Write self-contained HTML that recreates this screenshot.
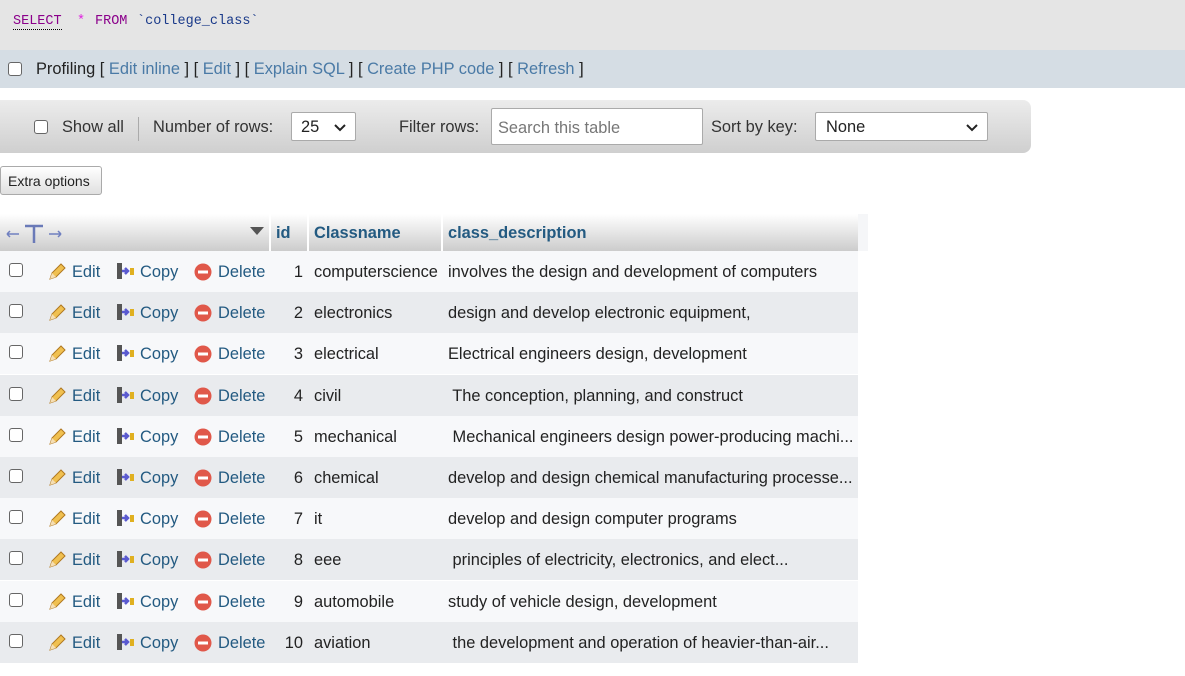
<!DOCTYPE html>
<html><head><style>
*{margin:0;padding:0;box-sizing:border-box}
body{width:1185px;height:676px;background:#fff;font-family:"Liberation Sans",Arial,sans-serif;font-size:16.4px;color:#222;position:relative;overflow:hidden}
.abs{position:absolute}
.sql{left:0;top:0;width:1185px;height:50px;background:#e5e5e5}
.sql span{position:absolute;top:14px;font-family:"Liberation Mono",monospace;font-size:13.5px}
.prof{left:0;top:50px;width:1185px;height:38px;background:#d5dde4}
.cb{position:absolute;width:14px;height:14px;border:1px solid #666;border-radius:3px;background:#fff}
a,.lk{color:#4a7aa6}
.nav{left:0;top:100px;width:1031px;height:53px;border-radius:0 8px 8px 0;background:linear-gradient(#ececec,#cfcfcf)}
.nav .t{position:absolute;top:18px;color:#333}
.sel{position:absolute;background:#fff;border:1px solid #aaa;border-radius:2px;height:32px;top:10px;padding:7px 9px}
.sel svg{position:absolute;right:9px;top:11px}
.btn{left:0;top:166px;width:102px;height:29px;border:1px solid #aaa;border-radius:3px;background:linear-gradient(#fff,#e0e0e0);font-size:14px;padding:6px 0 0 7px}
.hdr{left:0;top:214px;width:858px;height:37px;background:linear-gradient(#fff,#ccc)}
.hdr b{position:absolute;top:10px;color:#235a81}
.row{position:absolute;left:0;width:858px;height:41px}
.row span{position:absolute;top:12px}
.l{color:#235a81}
</style></head><body>
<div class="abs sql"><span style="left:13px;color:#8b008b;border-bottom:1px dotted #000;line-height:15px">SELECT</span><span style="left:77px;color:#e020e0">*</span><span style="left:95px;color:#8b008b">FROM</span><span style="left:137px;color:#1a3a8a">`college_class`</span></div>
<div class="abs prof"><div class="cb" style="left:8px;top:12px"></div><span style="position:absolute;left:36px;top:10px">Profiling [ <a>Edit inline</a> ] [ <a>Edit</a> ] [ <a>Explain SQL</a> ] [ <a>Create PHP code</a> ] [ <a>Refresh</a> ]</span></div>
<div class="abs nav">
<div class="cb" style="left:34px;top:20px"></div>
<span class="t" style="left:62px">Show all</span>
<div style="position:absolute;left:138px;top:17px;width:1px;height:24px;background:#aaa"></div>
<span class="t" style="left:153px">Number of rows:</span>
<div class="sel" style="left:291px;width:65px;top:12px;height:29px;padding:5px 9px">25<svg width="12" height="8"><path d="M1 1l5 5 5-5" stroke="#222" stroke-width="2" fill="none"/></svg></div>
<span class="t" style="left:399px">Filter rows:</span>
<div class="sel" style="left:491px;width:212px;top:8px;height:37px;padding:10px 6px;color:#777">Search this table</div>
<span class="t" style="left:711px">Sort by key:</span>
<div class="sel" style="left:815px;width:173px;top:12px;height:29px;padding:5px 10px">None<svg width="12" height="8"><path d="M1 1l5 5 5-5" stroke="#222" stroke-width="2" fill="none"/></svg></div>
</div>
<div class="abs btn">Extra options</div>
<div class="abs" style="left:858px;top:214px;width:10px;height:37px;background:#f5f6f8"></div>
<div class="abs hdr">
<svg style="position:absolute;left:4px;top:9px" width="60" height="22"><path d="M3 11h12M3 11l3-3M3 11l3 3M45 11h12M57 11l-3-3M57 11l-3 3" stroke="#7080c0" stroke-width="1.5" fill="none"/><path d="M21 3h18M30 3v17" stroke="#6a7ab8" stroke-width="2.5"/></svg>
<svg style="position:absolute;left:250px;top:13px" width="14" height="9"><path d="M0 0h14L7 8z" fill="#555"/></svg>
<div style="position:absolute;left:269px;top:0;width:2px;height:37px;background:#fff"></div>
<div style="position:absolute;left:307px;top:0;width:2px;height:37px;background:#fff"></div>
<div style="position:absolute;left:441px;top:0;width:2px;height:37px;background:#fff"></div>
<b style="left:276px">id</b><b style="left:314px">Classname</b><b style="left:448px">class_description</b>
</div>
<div id="rows"></div>
<script>
var d=[["1","computerscience","involves the design and development of computers"],["2","electronics","design and develop electronic equipment,"],["3","electrical","Electrical engineers design, development"],["4","civil"," The conception, planning, and construct"],["5","mechanical"," Mechanical engineers design power-producing machi..."],["6","chemical","develop and design chemical manufacturing processe..."],["7","it","develop and design computer programs"],["8","eee"," principles of electricity, electronics, and elect..."],["9","automobile","study of vehicle design, development"],["10","aviation"," the development and operation of heavier-than-air..."]];
var h="";d.forEach(function(r,i){var y=251+Math.round(i*41.2);
h+='<div class="row" style="top:'+y+'px;background:'+(i%2?'#e9ebee':'#f7f8fa')+'">'+
'<div class="cb" style="left:9px;top:12px"></div>'+
'<svg style="position:absolute;left:47px;top:11px" width="20" height="20" viewBox="0 0 20 20"><path d="M3 17l2-6 9-9 4 4-9 9z" fill="#f0c050" stroke="#b07820"/><path d="M3 17l2-6 4 4z" fill="#f5deb3"/></svg>'+
'<span class="l" style="left:72px">Edit</span>'+
'<svg style="position:absolute;left:116px;top:11px" width="20" height="18" viewBox="0 0 20 18"><rect x="1" y="1" width="5" height="16" fill="#555"/><path d="M6 9h6M9 6l3 3-3 3" stroke="#5a5ad0" stroke-width="2.5" fill="none"/><rect x="14" y="6" width="4" height="7" fill="#e0b020"/></svg>'+
'<span class="l" style="left:140px">Copy</span>'+
'<svg style="position:absolute;left:194px;top:12px" width="18" height="18"><circle cx="9" cy="9" r="8.5" fill="#e0584a"/><rect x="4" y="7.5" width="10" height="3" fill="#fff"/></svg>'+
'<span class="l" style="left:218px">Delete</span>'+
'<span style="right:'+(858-303)+'px">'+r[0]+'</span>'+
'<span style="left:314px">'+r[1]+'</span>'+
'<span style="left:448px;white-space:pre">'+r[2]+'</span></div>';});
document.getElementById("rows").innerHTML=h;
</script>
</body></html>
